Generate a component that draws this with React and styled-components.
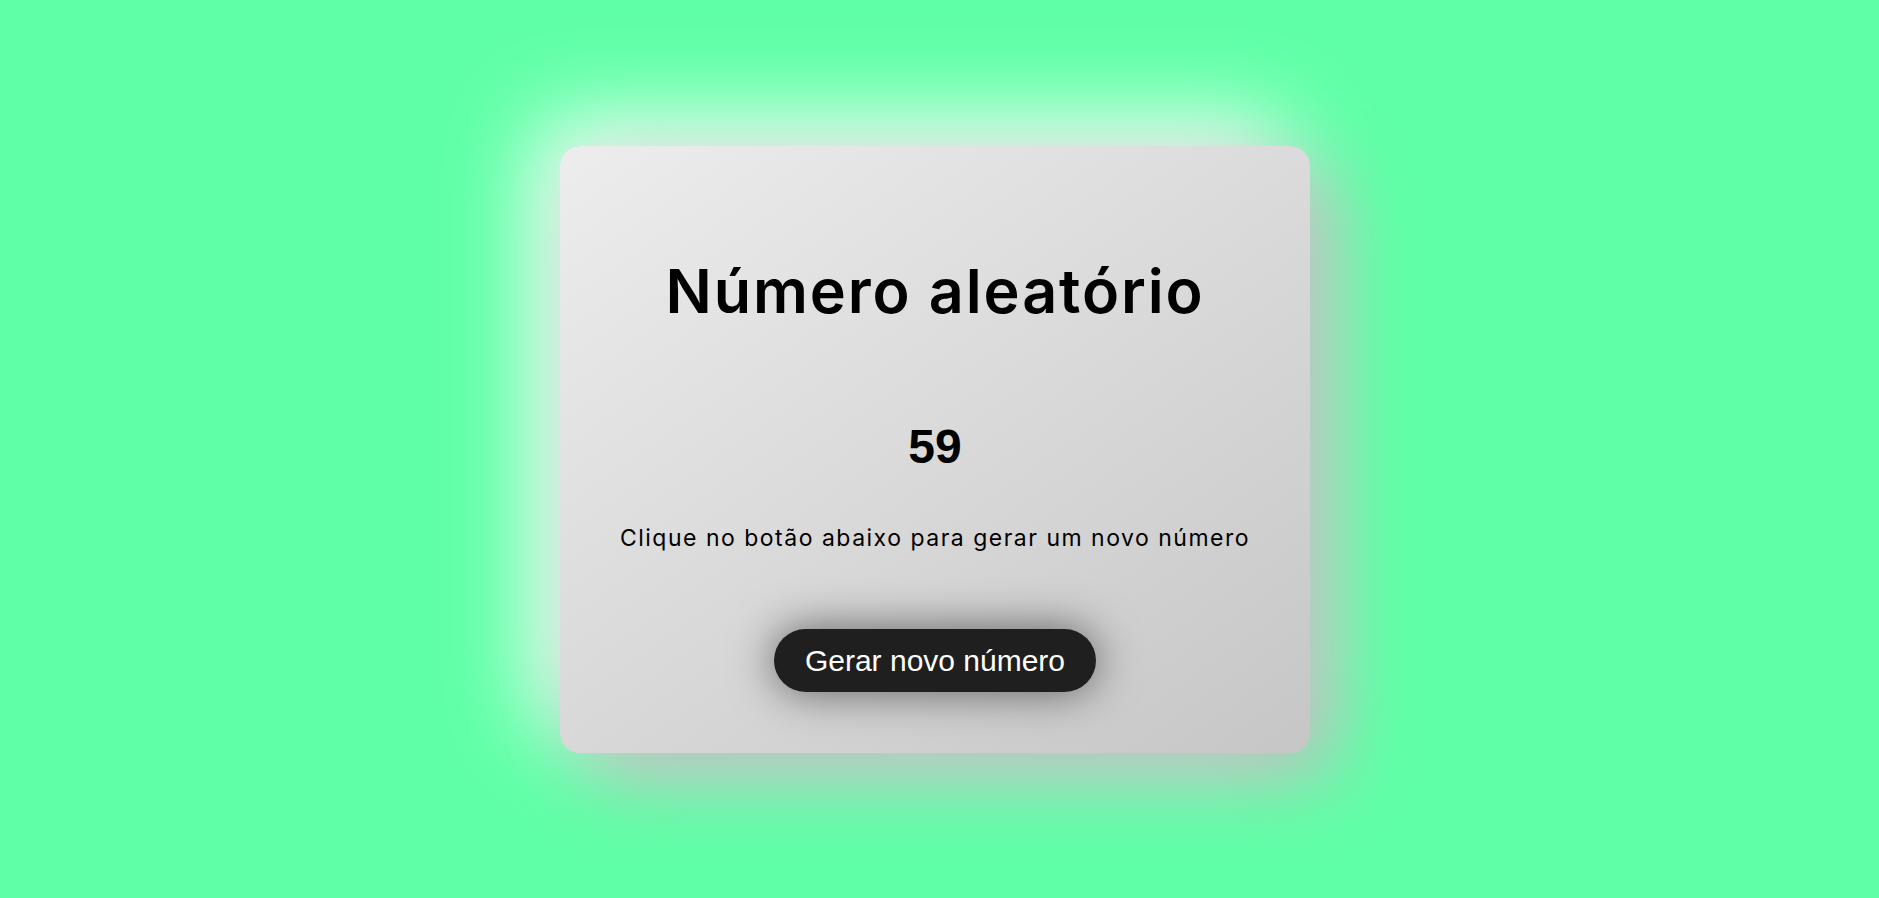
import React, { useState } from "react";
import styled, { createGlobalStyle } from "styled-components";

const GlobalStyle = createGlobalStyle`
  html, body {
    margin: 0;
    padding: 0;
    background: #5fffa7;
  }
  * { box-sizing: border-box; }
`;

const Page = styled.main`
  width: 100%;
  height: 898px;
  display: flex;
  align-items: center;
  justify-content: center;
  padding-right: 9px;
  background: #5fffa7;
  overflow: hidden;
`;

const Card = styled.section`
  width: 750px;
  height: 607px;
  border-radius: 20px;
  background: linear-gradient(145deg, #ededed, #c6c6c6);
  box-shadow: 25px 25px 80px #bebebe, -25px -25px 90px #ffffff;
  display: flex;
  flex-direction: column;
  align-items: center;
  padding-top: 115px;
`;

const Title = styled.h1`
  margin: 0;
  font-family: Inter, "Open Sans", sans-serif;
  font-weight: 600;
  font-size: 61px;
  line-height: 60px;
  letter-spacing: 1.9px;
  color: #000;
`;

const Number = styled.h2`
  margin: 102px 0 0;
  font-family: "Liberation Sans", Arial, sans-serif;
  font-weight: 700;
  font-size: 48px;
  line-height: 48px;
  color: #000;
`;

const Hint = styled.p`
  margin: 56px 0 0;
  font-family: Inter, "Open Sans", sans-serif;
  font-weight: 400;
  font-size: 23px;
  line-height: 22px;
  letter-spacing: 1.5px;
  color: #000;
`;

const Button = styled.button`
  margin-top: 80px;
  height: 63px;
  padding: 0 31px;
  border: none;
  border-radius: 32px;
  background: #1f1f1f;
  color: #ffffff;
  font-family: "Liberation Sans", Arial, sans-serif;
  font-size: 30px;
  line-height: 63px;
  cursor: pointer;
  box-shadow: 0 0 45px rgba(0, 0, 0, 0.55);
`;

export default function App() {
  const [value, setValue] = useState(59);
  return (
    <>
      <GlobalStyle />
      <Page>
        <Card>
          <Title>Número aleatório</Title>
          <Number>{value}</Number>
          <Hint>Clique no botão abaixo para gerar um novo número</Hint>
          <Button onClick={() => setValue(Math.floor(Math.random() * 100) + 1)}>
            Gerar novo número
          </Button>
        </Card>
      </Page>
    </>
  );
}
